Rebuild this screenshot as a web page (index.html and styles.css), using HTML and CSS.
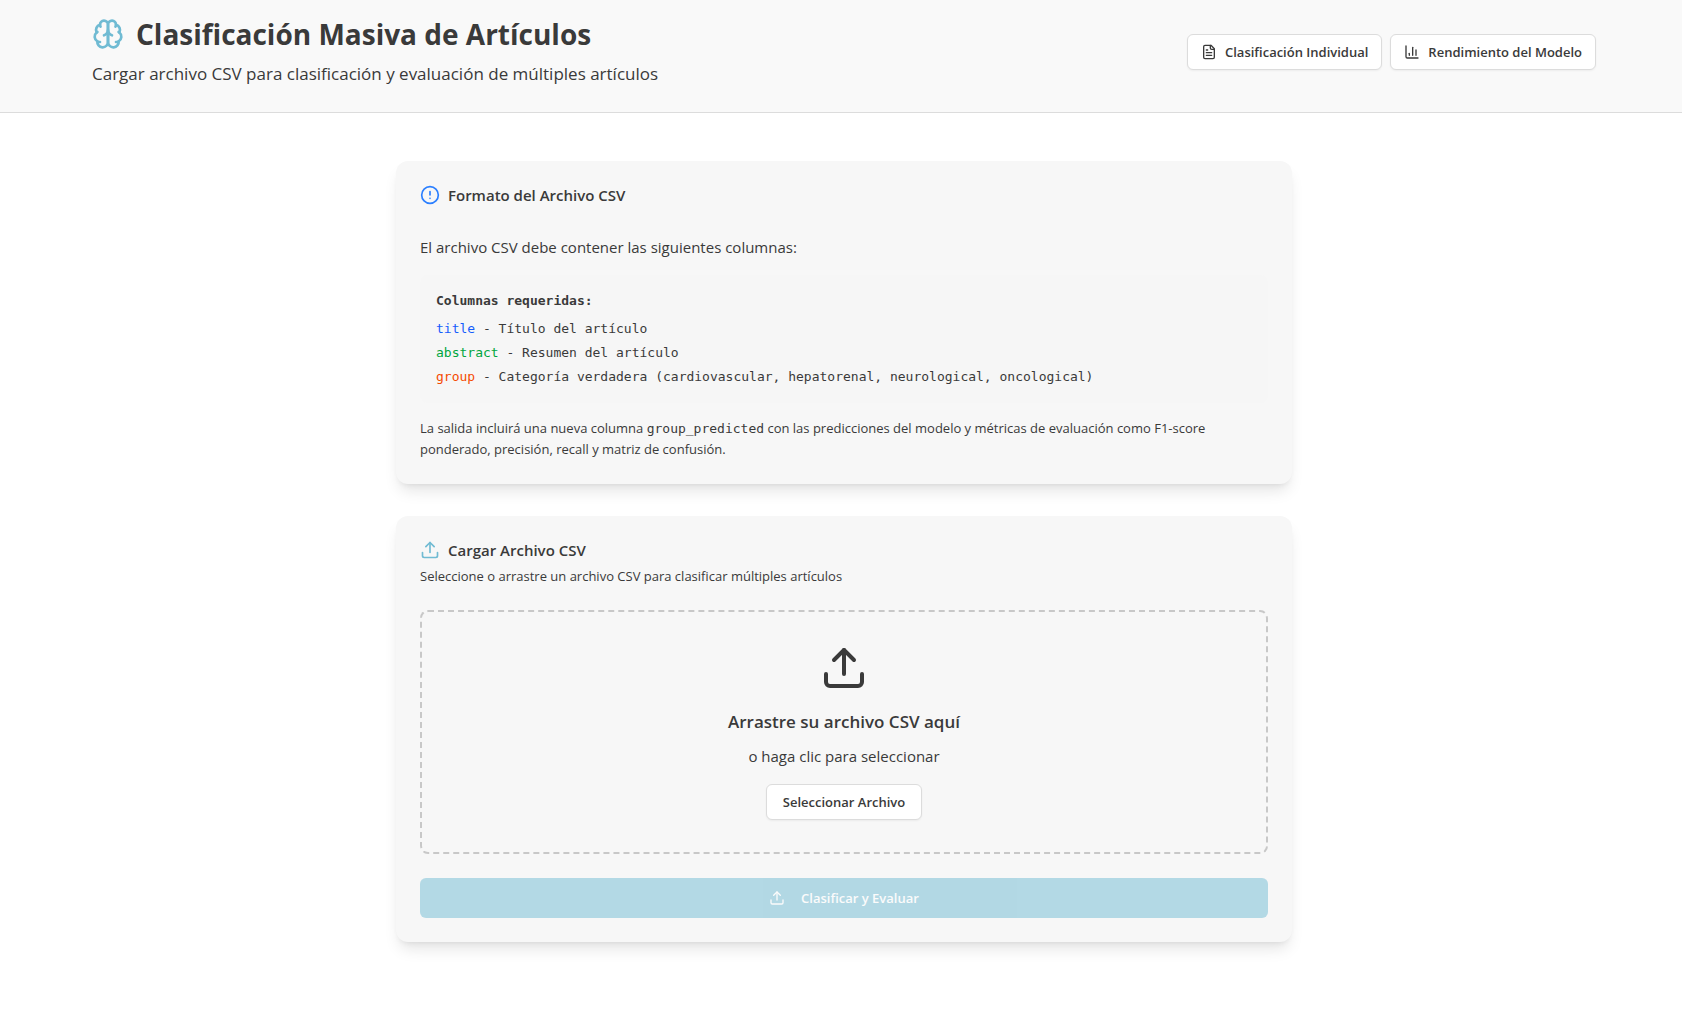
FILE: index.html
```html
<!DOCTYPE html>
<html lang="es">
<head>
<meta charset="utf-8">
<meta name="viewport" content="width=device-width, initial-scale=1">
<title>Clasificación Masiva de Artículos</title>
<link rel="stylesheet" href="styles.css">
</head>
<body>
<svg class="sprite" width="0" height="0" aria-hidden="true">
  <symbol id="upload" viewBox="0 0 24 24"><path d="M12 3v12"/><path d="m17 8-5-5-5 5"/><path d="M21 15v4a2 2 0 0 1-2 2H5a2 2 0 0 1-2-2v-4"/></symbol>
</svg>
<header class="header">
  <div class="container header-row">
    <div class="heading">
      <h1 class="title">
        <svg class="icon icon-xl accent" viewBox="0 0 24 24" aria-hidden="true"><path d="M12 5a3 3 0 1 0-5.997.125 4 4 0 0 0-2.526 5.77 4 4 0 0 0 .556 6.588A4 4 0 1 0 12 18Z"/><path d="M12 5a3 3 0 1 1 5.997.125 4 4 0 0 1 2.526 5.77 4 4 0 0 1-.556 6.588A4 4 0 1 1 12 18Z"/><path d="M15 13a4.5 4.5 0 0 1-3-4 4.5 4.5 0 0 1-3 4"/><path d="M17.599 6.5a3 3 0 0 0 .399-1.375"/><path d="M6.003 5.125A3 3 0 0 0 6.401 6.5"/><path d="M3.477 10.896a4 4 0 0 1 .585-.396"/><path d="M19.938 10.5a4 4 0 0 1 .585.396"/><path d="M6 18a4 4 0 0 1-1.967-.516"/><path d="M19.967 17.484A4 4 0 0 1 18 18"/></svg>
        Clasificación Masiva de Artículos
      </h1>
      <p class="subtitle">Cargar archivo CSV para clasificación y evaluación de múltiples artículos</p>
    </div>
    <nav class="nav">
      <a class="btn" href="#individual">
        <svg class="icon icon-sm" viewBox="0 0 24 24" aria-hidden="true"><path d="M15 2H6a2 2 0 0 0-2 2v16a2 2 0 0 0 2 2h12a2 2 0 0 0 2-2V7Z"/><path d="M14 2v4a2 2 0 0 0 2 2h4"/><path d="M10 9H8"/><path d="M16 13H8"/><path d="M16 17H8"/></svg>
        Clasificación Individual
      </a>
      <a class="btn" href="#rendimiento">
        <svg class="icon icon-sm" viewBox="0 0 24 24" aria-hidden="true"><path d="M3 3v16a2 2 0 0 0 2 2h16"/><path d="M18 17V9"/><path d="M13 17V5"/><path d="M8 17v-3"/></svg>
        Rendimiento del Modelo
      </a>
    </nav>
  </div>
</header>
<main class="main">
  <div class="stack">
    <section class="card">
      <h2 class="card-title">
        <svg class="icon icon-md info" viewBox="0 0 24 24" aria-hidden="true"><circle cx="12" cy="12" r="10"/><path d="M12 8v4"/><path d="M12 16h.01"/></svg>
        Formato del Archivo CSV
      </h2>
      <p class="lead">El archivo CSV debe contener las siguientes columnas:</p>
      <div class="schema">
        <p class="schema-title">Columnas requeridas:</p>
        <ul class="schema-list">
          <li><span class="blue">title</span> - Título del artículo</li>
          <li><span class="green">abstract</span> - Resumen del artículo</li>
          <li><span class="orange">group</span> - Categoría verdadera (cardiovascular, hepatorenal, neurological, oncological)</li>
        </ul>
      </div>
      <p class="note">La salida incluirá una nueva columna <code>group_predicted</code> con las predicciones del modelo y métricas de evaluación como F1-score ponderado, precisión, recall y matriz de confusión.</p>
    </section>
    <section class="card">
      <h2 class="card-title">
        <svg class="icon icon-md accent" aria-hidden="true"><use href="#upload"/></svg>
        Cargar Archivo CSV
      </h2>
      <p class="description">Seleccione o arrastre un archivo CSV para clasificar múltiples artículos</p>
      <div class="dropzone">
        <svg class="icon icon-2xl" aria-hidden="true"><use href="#upload"/></svg>
        <h3 class="drop-title">Arrastre su archivo CSV aquí</h3>
        <p class="drop-hint">o haga clic para seleccionar</p>
        <button class="btn btn-wide" type="button">Seleccionar Archivo</button>
      </div>
      <button class="submit" type="submit" disabled>
        <svg class="icon icon-sm" aria-hidden="true"><use href="#upload"/></svg>
        Clasificar y Evaluar
      </button>
    </section>
  </div>
</main>
</body>
</html>
```

FILE: styles.css
```css
:root {
  --text: #3a3a3a;
  --accent: #70bbd3;
  --border: #dcdcdc;
  --sans: "Segoe UI", "Open Sans", "Noto Sans", sans-serif;
  --mono: Consolas, "DejaVu Sans Mono", monospace;
}

* { box-sizing: border-box; }

body {
  margin: 0;
  background: #fff;
  color: var(--text);
  font-family: var(--sans);
  font-size: 15px;
  line-height: 24px;
}

h1, h2, h3, p, ul { margin: 0; padding: 0; }
ul { list-style: none; }

.sprite { position: absolute; }

.icon {
  flex: none;
  fill: none;
  stroke: currentColor;
  stroke-width: 2;
  stroke-linecap: round;
  stroke-linejoin: round;
}
.icon-sm { width: 16px; height: 16px; }
.icon-md { width: 20px; height: 20px; }
.icon-xl { width: 32px; height: 32px; }
.icon-2xl { width: 48px; height: 48px; }
.accent { color: var(--accent); }
.info { color: #2b7fff; }

.header {
  padding: 16px 0 24px 6px;
  background: #f9f9f9;
  border-bottom: 1px solid var(--border);
}
.container {
  max-width: 1536px;
  margin: 0 auto;
  padding: 0 16px;
}
.header-row {
  display: flex;
  flex-wrap: wrap;
  align-items: center;
  justify-content: space-between;
  gap: 16px;
}
.heading {
  display: flex;
  flex-direction: column;
  gap: 8px;
}
.title {
  display: flex;
  align-items: center;
  gap: 12px;
  font-size: 28px;
  line-height: 36px;
  font-weight: 700;
}
.subtitle {
  font-size: 17px;
  line-height: 28px;
}
.nav {
  display: flex;
  flex-wrap: wrap;
  gap: 8px;
}

.btn {
  display: inline-flex;
  align-items: center;
  justify-content: center;
  gap: 8px;
  height: 36px;
  padding: 0 13px;
  border: 1px solid var(--border);
  border-radius: 6px;
  background: #fff;
  box-shadow: 0 1px 2px rgba(0, 0, 0, 0.05);
  color: var(--text);
  font: 600 13px/20px var(--sans);
  text-decoration: none;
  cursor: pointer;
}
.btn-wide { padding: 0 16px; }

.main { padding: 48px 16px 48px 22px; }
.stack {
  display: flex;
  flex-direction: column;
  gap: 32px;
  max-width: 896px;
  margin: 0 auto;
}

.card {
  display: flex;
  flex-direction: column;
  padding: 24px;
  border-radius: 12px;
  background: #f7f7f7;
  box-shadow: 0 10px 15px -3px rgba(0, 0, 0, 0.1), 0 4px 6px -4px rgba(0, 0, 0, 0.1);
}
.card-title {
  display: flex;
  align-items: center;
  gap: 8px;
  font-size: 15px;
  line-height: 20px;
  font-weight: 600;
}
.lead { margin: 30px 0 16px; }

.schema {
  padding: 16px;
  border-radius: 8px;
  background: #f6f6f6;
  font: 13px/20px var(--mono);
}
.schema-title {
  margin-bottom: 8px;
  font-weight: 700;
}
.schema-list {
  display: flex;
  flex-direction: column;
  gap: 4px;
}
.blue { color: #155dfc; }
.green { color: #00a63e; }
.orange { color: #f54900; }

.note {
  margin-top: 15px;
  font-size: 13px;
  line-height: 21px;
}
.note code { font: 13px/16px var(--mono); }

.description {
  margin: 6px 0 24px;
  font-size: 13px;
  line-height: 20px;
}

.dropzone {
  display: flex;
  flex-direction: column;
  align-items: center;
  padding: 32px;
  border: 2px dashed #c8c8c8;
  border-radius: 8px;
  text-align: center;
}
.drop-title {
  margin: 16px 0 8px;
  font-size: 17px;
  line-height: 28px;
  font-weight: 600;
}
.drop-hint { margin-bottom: 16px; }

.submit {
  display: flex;
  align-items: center;
  justify-content: center;
  gap: 16px;
  height: 40px;
  margin-top: 24px;
  border: 0;
  border-radius: 6px;
  background: var(--accent);
  color: #fff;
  font: 600 13px/20px var(--sans);
}
.submit:disabled { opacity: 0.5; }
```
